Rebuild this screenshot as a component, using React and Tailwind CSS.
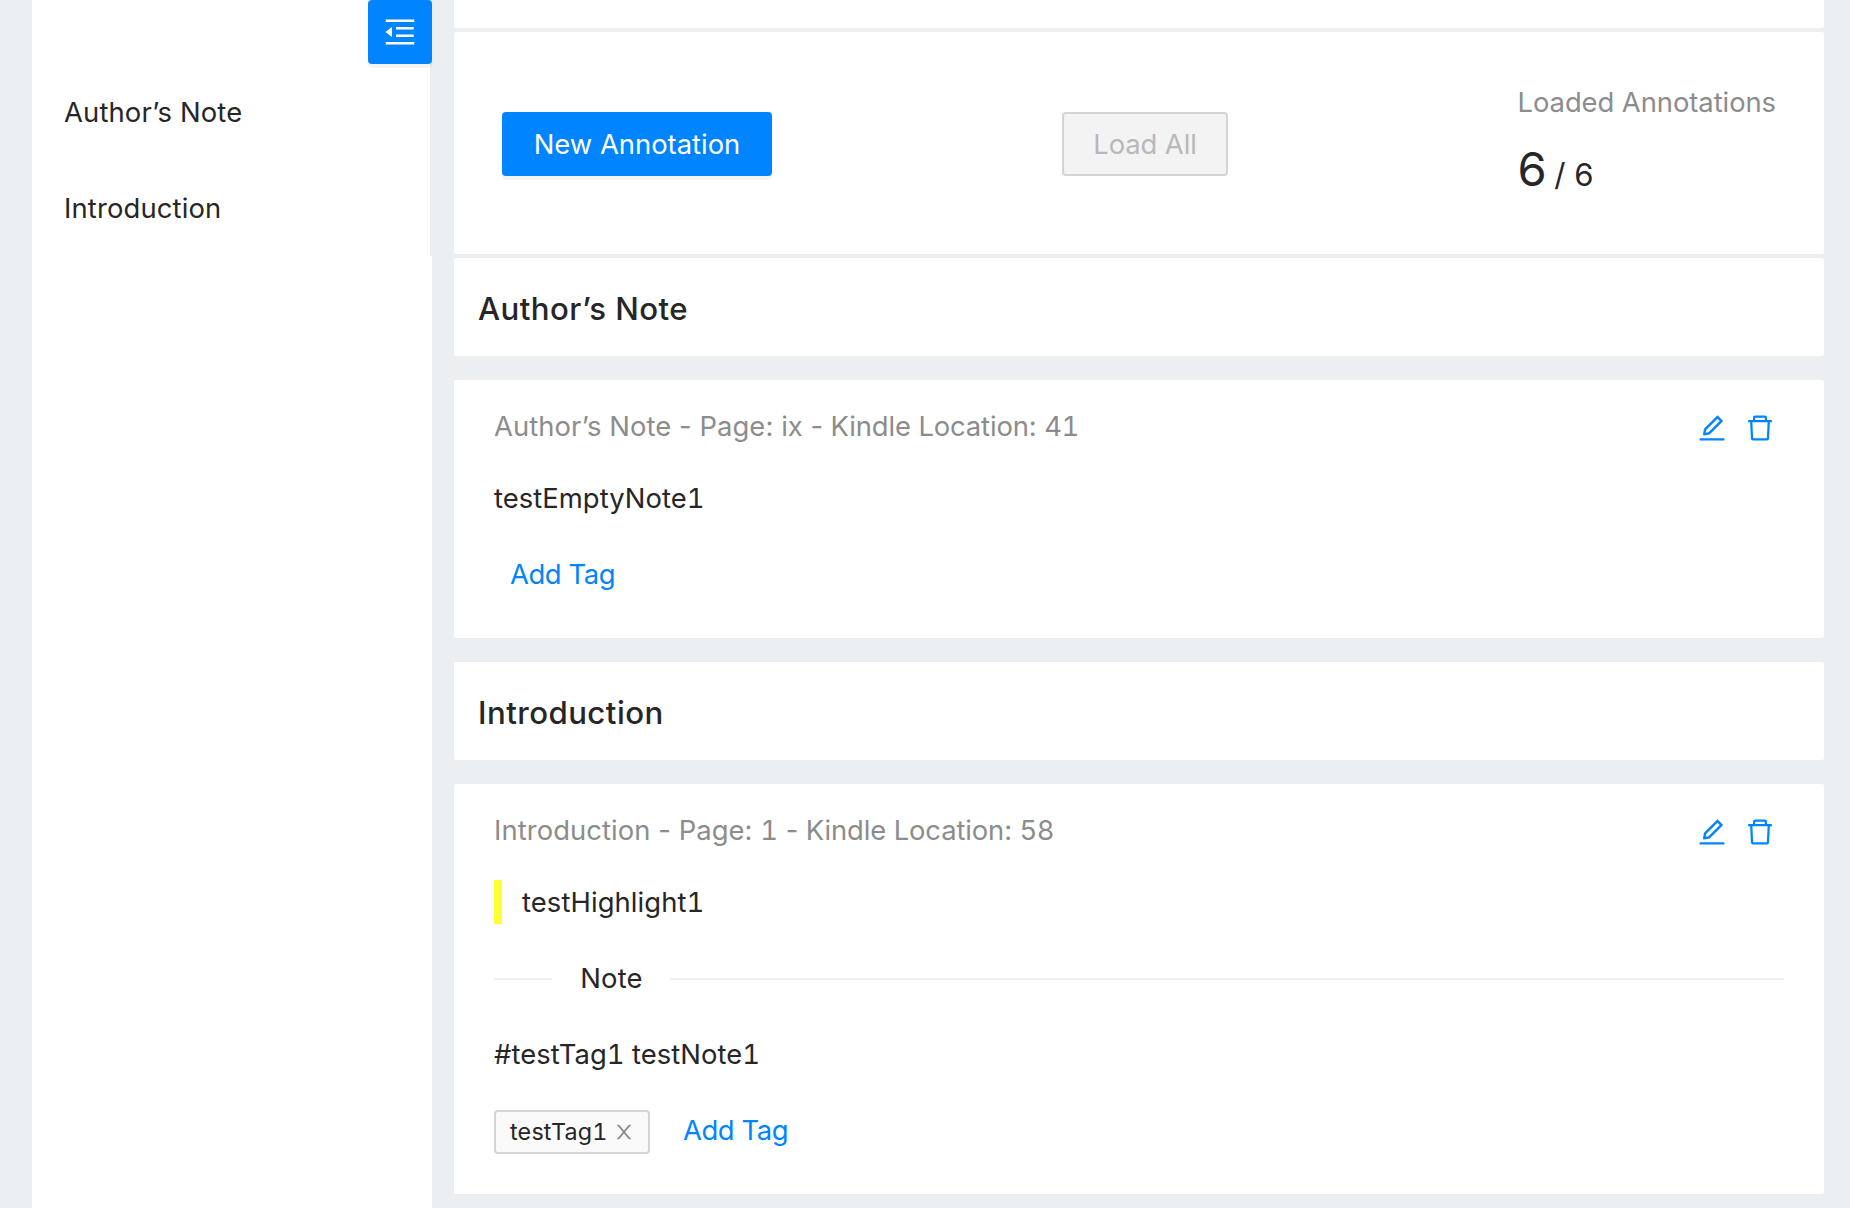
import React from "react";

function Icon({ path, className }) {
  return (
    <svg viewBox="64 64 896 896" fill="currentColor" className={className} aria-hidden="true">
      <path d={path} />
    </svg>
  );
}

const MENU_FOLD =
  "M408 442h480c4.4 0 8-3.6 8-8v-56c0-4.4-3.6-8-8-8H408c-4.4 0-8 3.6-8 8v56c0 4.4 3.6 8 8 8zm-8 204c0 4.4 3.6 8 8 8h480c4.4 0 8-3.6 8-8v-56c0-4.4-3.6-8-8-8H408c-4.4 0-8 3.6-8 8v56zm504-486H120c-4.4 0-8 3.6-8 8v56c0 4.4 3.6 8 8 8h784c4.4 0 8-3.6 8-8v-56c0-4.4-3.6-8-8-8zm0 632H120c-4.4 0-8 3.6-8 8v56c0 4.4 3.6 8 8 8h784c4.4 0 8-3.6 8-8v-56c0-4.4-3.6-8-8-8zM115.4 518.9L271.7 642c5.8 4.6 14.4.5 14.4-6.9V388.9c0-7.4-8.5-11.5-14.4-6.9L115.4 505.1a8.74 8.74 0 0 0 0 13.8z";
const EDIT =
  "M257.7 752c2 0 4-.2 6-.5L431.9 722c2-.4 3.9-1.3 5.3-2.8l423.9-423.9a9.96 9.96 0 0 0 0-14.1L694.9 114.9c-1.9-1.9-4.4-2.9-7.1-2.9s-5.2 1-7.1 2.9L256.8 538.8c-1.5 1.5-2.4 3.3-2.8 5.3l-29.5 168.2a33.5 33.5 0 0 0 9.4 29.8c6.6 6.4 14.9 9.9 23.8 9.9zm67.4-174.4L687.8 215l73.3 73.3-362.7 362.6-88.9 15.7 15.6-89zM880 836H144c-17.7 0-32 14.3-32 32v36c0 4.4 3.6 8 8 8h784c4.4 0 8-3.6 8-8v-36c0-17.7-14.3-32-32-32z";
const TRASH =
  "M360 184h-8c4.4 0 8-3.6 8-8v8h304v-8c0 4.4 3.6 8 8 8h-8v72h72v-80c0-35.3-28.7-64-64-64H352c-35.3 0-64 28.7-64 64v80h72v-72zm504 72H160c-17.7 0-32 14.3-32 32v32c0 4.4 3.6 8 8 8h60.4l24.7 523c1.6 34.1 29.8 61 63.9 61h454c34.2 0 62.3-26.8 63.9-61l24.7-523H888c4.4 0 8-3.6 8-8v-32c0-17.7-14.3-32-32-32zM731.3 840H292.7l-24.2-512h487l-24.2 512z";
const CLOSE =
  "M563.8 512l262.5-312.9c4.4-5.2.7-13.1-6.1-13.1h-79.8c-4.7 0-9.2 2.1-12.3 5.7L511.6 449.8 295.1 191.7c-3-3.6-7.5-5.7-12.3-5.7H203c-6.8 0-10.5 7.9-6.1 13.1L459.4 512 196.9 824.9A7.95 7.95 0 0 0 203 838h79.8c4.7 0 9.2-2.1 12.3-5.7l216.5-258.1 216.5 258.1c3 3.6 7.5 5.7 12.3 5.7h79.8c6.8 0 10.5-7.9 6.1-13.1L563.8 512z";

function SectionHeading({ children, className = "" }) {
  return (
    <section className={`h-[102px] rounded border-2 border-[#eeeeee] bg-white px-6 pt-[26px] ${className}`}>
      <h2 className="text-[31.2px] leading-[50px] font-medium tracking-[0.45px]">{children}</h2>
    </section>
  );
}

function AnnotationCard({ chapter, page, location, className, children }) {
  return (
    <article className={`mt-5 rounded border-2 border-[#eeeeee] bg-white px-10 pt-6 ${className}`}>
      <header className="flex items-center justify-between">
        <div className="tracking-[0.07px] text-[#8c8c8c]">
          {chapter} - Page: <span className="tabular-nums">{page}</span>
          <span className="tracking-[-0.12px]"> - Kindle Location: </span>
          <span className="tracking-[-0.4px] tabular-nums">{location}</span>
        </div>
        <div className="flex gap-5 pt-1 pr-[10px] text-[#0084ff]">
          <button><Icon path={EDIT} className="size-7" /></button>
          <button><Icon path={TRASH} className="size-7" /></button>
        </div>
      </header>
      {children}
    </article>
  );
}

export default function App() {
  return (
    <div className="flex h-[1208px] overflow-hidden bg-[#ebeff2] pl-8 font-['Inter',sans-serif] text-[27.4px] leading-[44px] text-[#262626]">
      <aside className="w-[400px] shrink-0 bg-white">
        <nav className="flex h-64 flex-col border-r-2 border-[#eeeeee] tracking-[0.15px]">
          <button className="-mr-0.5 flex size-16 shrink-0 items-center justify-center self-end rounded bg-[#0084ff] text-white shadow-[0_4px_0_rgba(0,0,0,0.045)]">
            <Icon path={MENU_FOLD} className="size-8" />
          </button>
          <a className="mt-[26px] pl-8">Author’s Note</a>
          <a className="mt-[52px] pl-8">Introduction</a>
        </nav>
      </aside>
      <main className="ml-5 w-[1374px]">
        <div className="h-[30px] rounded-b border-2 border-t-0 border-[#eeeeee] bg-white" />
        <section className="flex h-[226px] rounded border-2 border-[#eeeeee] bg-white pl-12">
          <button className="mt-20 flex h-16 w-[270px] items-center justify-center rounded bg-[#0084ff] text-white shadow-[0_4px_0_rgba(0,0,0,0.045)]">
            New Annotation
          </button>
          <button className="mt-20 ml-[290px] flex h-16 w-[166px] items-center justify-center rounded border-2 border-[#d4d4d4] bg-[#f3f3f3] tracking-[-0.1px] text-[#b8b8b8]">
            Load All
          </button>
          <div className="ml-[289.5px] pt-12">
            <div className="tracking-[-0.06px] text-[#8c8c8c]">Loaded Annotations</div>
            <div className="flex items-baseline gap-[7.5px] pt-[15px] text-[47px] leading-[60px]">
              6<span className="text-[31.2px]">/ 6</span>
            </div>
          </div>
        </section>

        <SectionHeading>Author’s Note</SectionHeading>
        <AnnotationCard chapter="Author’s Note" page="ix" location="41" className="h-[262px]">
          <p className="mt-7 tracking-[0.05px] tabular-nums">testEmptyNote1</p>
          <button className="mt-8 ml-4 block tracking-[-0.4px] text-[#0084ff]">Add Tag</button>
        </AnnotationCard>

        <SectionHeading className="mt-5">Introduction</SectionHeading>
        <AnnotationCard chapter="Introduction" page="1" location="58" className="h-[414px]">
          <p className="mt-7 border-l-8 border-[#ffff33] pl-5 tracking-[0.1px] tabular-nums">testHighlight1</p>
          <div className="mt-8 flex items-center">
            <div className="mt-0.5 h-0.5 w-[58px] bg-[#f0f0f0]" />
            <div className="w-[118px] pl-px text-center tracking-[0.2px]">Note</div>
            <div className="mt-0.5 h-0.5 grow bg-[#f0f0f0]" />
          </div>
          <p className="mt-8 tracking-[0.05px] tabular-nums">#testTag1 testNote1</p>
          <div className="mt-8 flex items-start">
            <div className="mt-0.5 flex h-11 w-[156px] items-center rounded border-2 border-[#d4d4d4] bg-[#fafafa] pl-[14px] text-[23.3px]">
              <span className="w-[104px] tracking-[0.2px] tabular-nums">testTag1</span>
              <Icon path={CLOSE} className="size-5 text-[#8c8c8c]" />
            </div>
            <button className="ml-[33px] tracking-[-0.4px] text-[#0084ff]">Add Tag</button>
          </div>
        </AnnotationCard>
      </main>
    </div>
  );
}
